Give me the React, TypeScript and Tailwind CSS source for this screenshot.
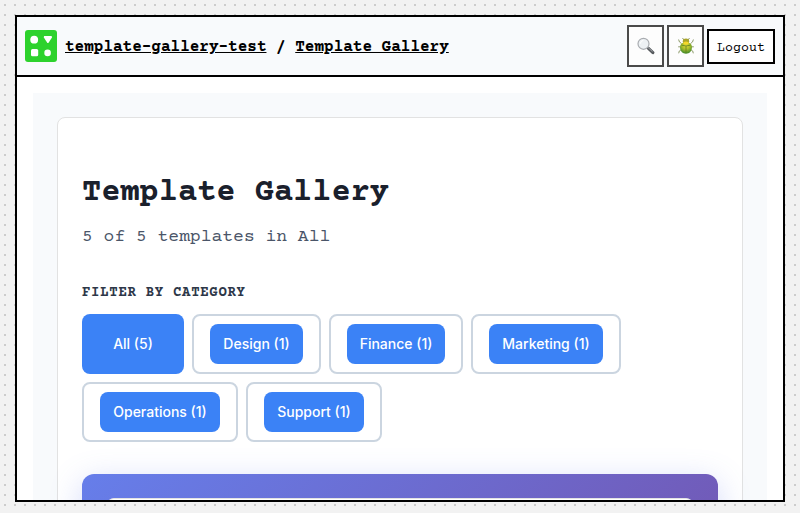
const filters = ["Design (1)", "Finance (1)", "Marketing (1)", "Operations (1)", "Support (1)"];
const widths = ["w-[129px]", "w-[134px]", "w-[150px]", "w-[156px]", "w-[136px]"];

function Logo() {
  return (
    <svg className="size-8 shrink-0" viewBox="0 0 32 32">
      <rect width="32" height="32" rx="3" fill="#2dd22d" />
      <circle cx="9.2" cy="9.7" r="3.900" fill="#fff" />
      <path d="M19.200 6h7.300l.6 1.200-3.700 5.900h-1L18.700 7.200z" fill="#fff" />
      <rect x="6" y="19" width="7.200" height="7.200" rx="1.500" fill="#fff" />
      <circle cx="22.600" cy="22.900" r="3.300" fill="#fff" />
    </svg>
  );
}

function Magnifier() {
  return (
    <svg className="size-[18px]" viewBox="0 0 18 18">
      <path d="M11.200 11.200l4.700 4.400" stroke="#55585c" strokeWidth="3" strokeLinecap="round" />
      <path d="M10.500 10l4.700 4.400" stroke="#a2a6aa" strokeWidth="1" strokeLinecap="round" />
      <circle cx="6.500" cy="6.800" r="5.500" fill="#edf1f4" stroke="#a9acb0" strokeWidth="1.200" />
      <path d="M3.300 6.700a3.500 3.500 0 0 1 3-3.300" fill="none" stroke="#fff" />
    </svg>
  );
}

function Beetle() {
  return (
    <svg className="size-[18px]" viewBox="0 0 18 18">
      <defs>
        <radialGradient id="shell" cx=".5" cy=".3" r=".65">
          <stop offset="0" stopColor="#e9df38" />
          <stop offset=".5" stopColor="#a9bd2b" />
          <stop offset="1" stopColor="#4a8f2c" />
        </radialGradient>
      </defs>
      <path d="M7 3L5.500 1M11 3l1.500-2M4.500 6.500L2.500 5 1.600 2.500M13.500 6.500l2-1.500.9-2.500M4 9.800H1.200M14 9.800h2.800M4.500 12.500L2.300 14l-.6 2.300M13.500 12.500l2.200 1.500.6 2.300" fill="none" stroke="#8f9c6c" strokeWidth="1" />
      <ellipse cx="9" cy="4.200" rx="3.200" ry="2.700" fill="#aaa52a" />
      <path d="M3.100 10.300c0-3.300 2.300-5 5.900-5s5.900 1.700 5.900 5c0 4-2.500 6.400-5.900 6.400s-5.900-2.400-5.900-6.400z" fill="url(#shell)" />
      <path d="M4.500 8.200q4.500 1.500 9 0M9 9v7" fill="none" stroke="#5f7f20" strokeWidth=".8" />
      <ellipse cx="9" cy="6" rx="2.800" ry="1.500" fill="#f6d72a" />
    </svg>
  );
}

export default function App() {
  return (
    <div className="h-[513px] w-full overflow-hidden bg-[#f2f2f2] bg-[conic-gradient(from_270deg_at_2px_2px,#ccc_90deg,transparent_0)] bg-[length:10px_10px] bg-[position:4px_4px] p-[15px] font-['Courier_Prime','Liberation_Mono',monospace]">
      <div className="flex h-[487px] flex-col overflow-hidden border-2 border-black bg-white">
        <header className="flex h-[60px] shrink-0 items-center border-b-2 border-black bg-[#f8fafc] pl-2 pr-2">
          <Logo />
          <h2 className="ml-2 whitespace-pre pt-[2px] text-base font-bold leading-6 text-black">
            <a className="underline">template-gallery-test</a> / <a className="underline">Template Gallery</a>
          </h2>
          <div className="ml-auto flex items-center gap-[3px]">
            <button className="flex h-[42px] w-[37px] items-center justify-center border-2 border-[#4a4a4a] bg-[#fdfdfd]"><Magnifier /></button>
            <button className="flex h-[42px] w-[37px] items-center justify-center border-2 border-[#4a4a4a] bg-[#fdfdfd]"><Beetle /></button>
            <button className="h-[35px] w-[68px] border-2 border-black bg-white pt-[5px] text-[13.333px] text-black">Logout</button>
          </div>
        </header>
        <main className="min-h-0 grow overflow-hidden p-4">
          <div className="bg-[#f8fafc] p-6">
            <section className="rounded-lg border border-[#e2e2e2] bg-white px-6 pb-6 pt-14">
              <h1 className="text-[32px] font-bold leading-[38px] text-[#1a202c]">Template Gallery</h1>
              <p className="mt-[11px] text-lg leading-[29px] text-[#4a5568]">5 of 5 templates in All</p>
              <h3 className="mt-[30px] text-sm font-bold uppercase leading-[22px] tracking-[0.05em] text-[#2d3748]">Filter by Category</h3>
              <div className="mt-[10px] flex flex-wrap gap-2 font-['Inter',sans-serif] text-sm font-medium text-white">
                <button className="h-[60px] w-[102px] rounded-lg bg-[#3b82f6]">All (5)</button>
                {filters.map((label, i) => (
                  <div key={label} className={`flex h-[60px] rounded-lg border-2 border-[#cbd5e0] bg-white px-4 py-2 ${widths[i]}`}>
                    <button className="h-10 w-full whitespace-nowrap rounded-lg bg-[#3b82f6]">{label}</button>
                  </div>
                ))}
              </div>
              <div className="mt-8 h-[340px] rounded-xl bg-[linear-gradient(135deg,#667eea_0%,#764ba2_100%)] p-6 shadow-[0_8px_32px_rgba(102,126,234,0.3)]">
                <div className="h-full rounded-lg border border-[#e2e2e2] bg-white" />
              </div>
            </section>
          </div>
        </main>
      </div>
    </div>
  );
}
